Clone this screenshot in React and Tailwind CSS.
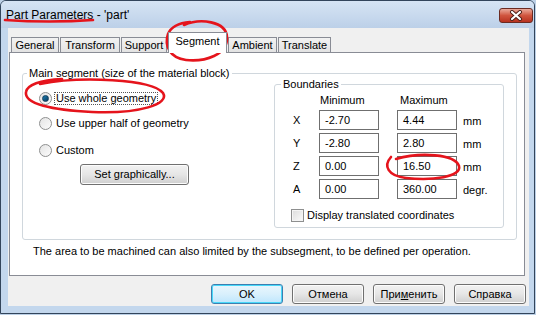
import React from "react";

function Radio({ checked }) {
  return (
    <span className="relative flex w-[13px] h-[13px] shrink-0 items-center justify-center rounded-full border border-[#8e8f8f] bg-gradient-to-br from-[#e4e4e4] to-[#fcfcfc]">
      {checked && (
        <span className="w-[7px] h-[7px] rounded-full bg-gradient-to-br from-[#1b7fb6] to-[#0b3d5e] border border-[#123d5a]" />
      )}
    </span>
  );
}

function Field({ value }) {
  return (
    <div className="h-[20px] w-[60px] border border-[#6f6f6f] bg-white pl-[5px] flex items-center leading-none">
      {value}
    </div>
  );
}

function Btn({ children, def }) {
  return (
    <div
      className={
        "w-[72px] h-[20px] rounded-[3px] flex items-center justify-center " +
        (def
          ? "border border-[#3c7fb1] bg-gradient-to-b from-[#eaf6fd] via-[#d9f0fc] to-[#bee6fd] shadow-[inset_0_0_0_1px_#48d8f9]"
          : "border border-[#707070] bg-gradient-to-b from-[#f2f2f2] via-[#e6e6e6] to-[#cfcfcf] shadow-[inset_0_0_0_1px_#fcfcfc]")
      }
    >
      {children}
    </div>
  );
}

function Tab({ label, w, selected }) {
  if (selected) {
    return (
      <div
        className={`relative z-10 h-[21px] -mb-[1px] border-t border-l border-r border-[#898c95] bg-white flex items-start justify-center pt-[3px] ${w}`}
      >
        {label}
      </div>
    );
  }
  return (
    <div
      className={`h-[15px] border-t border-l border-r border-[#898c95] bg-gradient-to-b from-[#f2f2f2] to-[#e3e3e3] flex items-center justify-center ${w}`}
    >
      {label}
    </div>
  );
}

export default function App() {
  const rows = [
    ["X", "-2.70", "4.44", "mm"],
    ["Y", "-2.80", "2.80", "mm"],
    ["Z", "0.00", "16.50", "mm"],
    ["A", "0.00", "360.00", "degr."],
  ];
  return (
    <div className="relative w-[536px] h-[315px] overflow-hidden bg-[#bcd0e6] font-['Liberation_Sans',Arial,sans-serif] text-[11px] text-black leading-none">
      <div className="flex flex-col w-[535px] h-[314px] border border-[#33455b] rounded-t-[6px] bg-[#c3d7ed]">
        {/* title bar */}
        <div className="flex h-[27px] shrink-0 rounded-t-[5px] bg-gradient-to-b from-[#d6e4f4] to-[#bcd0e8]">
          <div className="pl-[5px] pt-[8px] text-[12px]">Part Parameters - 'part'</div>
          <div className="ml-auto mt-[7px] mr-[1px] w-[34px] h-[15px] rounded-[3px] border border-[#6b2b22] bg-gradient-to-b from-[#e9a99b] via-[#d0553f] to-[#b8321f] flex items-center justify-center">
            <svg width="14" height="11" viewBox="0 0 14 11">
              <path d="M3 2 L11 9 M11 2 L3 9" stroke="#4a1d16" strokeWidth="4" strokeLinecap="round" />
              <path d="M3 2 L11 9 M11 2 L3 9" stroke="#ffffff" strokeWidth="2.2" strokeLinecap="round" />
            </svg>
          </div>
        </div>

        {/* client */}
        <div className="ml-[7px] w-[521px] h-[278px] bg-[#f0f0f0] flex flex-col">
          {/* tabs */}
          <div className="flex items-end gap-[1px] pl-[3px] pt-[4px] h-[24px]">
            <Tab label="General" w="w-[48px]" />
            <Tab label="Transform" w="w-[60px]" />
            <Tab label="Support" w="w-[46px]" />
            <Tab label="Segment" w="w-[59px]" selected />
            <Tab label="Ambient" w="w-[49px]" />
            <Tab label="Translate" w="w-[53px]" />
          </div>
          {/* panel */}
          <div className="ml-[1px] w-[516px] h-[224px] border border-[#898c95] bg-white flex flex-col">
            <div className="relative mt-[20px] ml-[12px] w-[495px] h-[167px] shrink-0 border border-[#d0d7dd] rounded-[3px] flex">
              <div className="absolute -top-[6px] left-[4px] px-[2px] bg-white">
                Main segment (size of the material block)
              </div>
              {/* left column */}
              <div className="flex flex-col pl-[16px]">
                <div className="mt-[16px] h-[16px] flex items-center gap-[3px]">
                  <Radio checked />
                  <span className="outline-1 outline-dotted outline-[#555] px-[1px]">Use whole geometry</span>
                </div>
                <div className="mt-[9px] h-[16px] flex items-center gap-[4px]">
                  <Radio />
                  <span>Use upper half of geometry</span>
                </div>
                <div className="mt-[11px] h-[16px] flex items-center gap-[4px]">
                  <Radio />
                  <span>Custom</span>
                </div>
                <div className="mt-[6px] ml-[41px] w-[109px] h-[21px] rounded-[3px] border border-[#707070] bg-gradient-to-b from-[#f2f2f2] via-[#e6e6e6] to-[#cfcfcf] shadow-[inset_0_0_0_1px_#fcfcfc] flex items-center justify-center">
                  Set graphically...
                </div>
              </div>
              {/* boundaries */}
              <div className="relative ml-auto mr-[12px] mt-[10px] w-[230px] h-[144px] border border-[#d0d7dd] rounded-[3px] pl-[18px] pt-[8px]">
                <div className="absolute -top-[6px] left-[6px] px-[2px] bg-white">Boundaries</div>
                <div className="grid grid-cols-[26px_60px_18px_60px_auto] gap-y-[3px] items-center">
                  <div className="h-[14px]" />
                  <div className="pl-[1px]">Minimum</div>
                  <div />
                  <div className="pl-[3px]">Maximum</div>
                  <div />
                  {rows.map(([l, a, b, u]) => (
                    <React.Fragment key={l}>
                      <div className="mt-[1px]">{l}</div>
                      <Field value={a} />
                      <div />
                      <Field value={b} />
                      <div className="pl-[6px] mt-[2px]">{u}</div>
                    </React.Fragment>
                  ))}
                </div>
                <div className="mt-[10px] -ml-[2px] flex items-center gap-[3px]">
                  <span className="w-[13px] h-[13px] border border-[#8e8f8f] bg-gradient-to-br from-[#dcdcdc] to-[#fbfbfb] shadow-[inset_0_0_0_1px_#f4f4f4]" />
                  <span>Display translated coordinates</span>
                </div>
              </div>
            </div>
            <div className="mt-[6px] pl-[23px]">
              The area to be machined can also limited by the subsegment, to be defined per operation.
            </div>
          </div>
          {/* buttons */}
          <div className="mt-[8px] flex justify-end gap-[9px] pr-[3px]">
            <Btn def>OK</Btn>
            <Btn>Отмена</Btn>
            <Btn>
              При<span className="underline">м</span>енить
            </Btn>
            <Btn>Справка</Btn>
          </div>
        </div>
      </div>

      {/* red annotations */}
      <svg className="absolute inset-0 pointer-events-none" width="536" height="315" viewBox="0 0 536 315">
        <g fill="none" stroke="#e5141c" strokeWidth="2.6" strokeLinecap="round" strokeLinejoin="round">
          <path d="M5 20 Q50 23 93 20" />
          <path d="M184 25 C200 18 226 21 227 37 C228 55 205 62 186 60 C170 58 164 46 168 34 C171 27 178 23 190 22" />
          <path d="M40 84 C80 76 152 79 163 93 C170 104 140 114 92 112 C52 110 24 104 26 92 C27 85 40 80 62 79" />
          <path d="M396 159 C420 152 455 154 459 166 C462 177 432 181 406 178 C388 176 383 166 391 157" />
        </g>
      </svg>
    </div>
  );
}
